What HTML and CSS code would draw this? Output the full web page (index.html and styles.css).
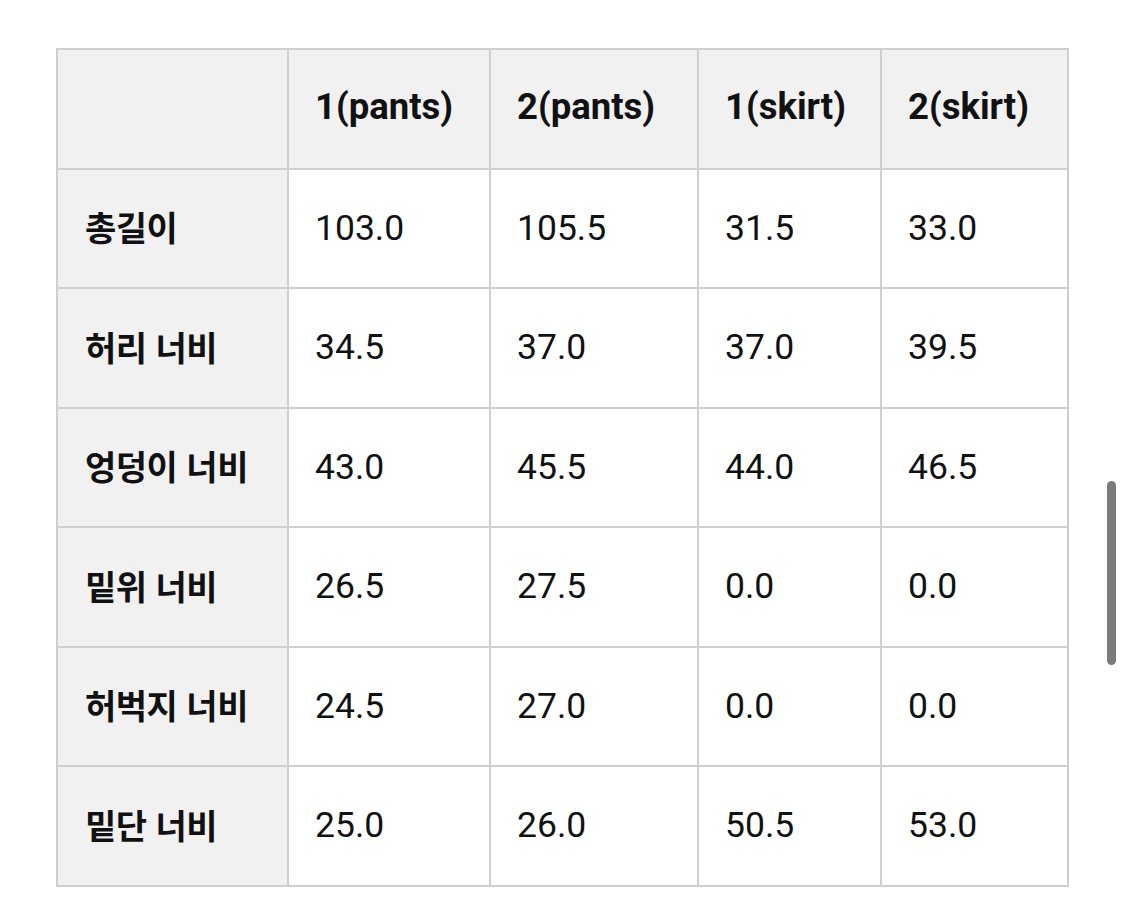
FILE: index.html
```html
<!DOCTYPE html>
<html lang="ko">
<head>
<meta charset="utf-8">
<link rel="stylesheet" href="styles.css">
</head>
<body>
<div class="page">
  <table class="size-table">
    <colgroup>
      <col class="c0"><col class="c1"><col class="c2"><col class="c3"><col class="c4">
    </colgroup>
    <thead>
      <tr>
        <th class="corner"></th>
        <th>1(pants)</th>
        <th>2(pants)</th>
        <th>1(skirt)</th>
        <th>2(skirt)</th>
      </tr>
    </thead>
    <tbody>
      <tr><th>총길이</th><td>103.0</td><td>105.5</td><td>31.5</td><td>33.0</td></tr>
      <tr><th>허리 너비</th><td>34.5</td><td>37.0</td><td>37.0</td><td>39.5</td></tr>
      <tr><th>엉덩이 너비</th><td>43.0</td><td>45.5</td><td>44.0</td><td>46.5</td></tr>
      <tr><th>밑위 너비</th><td>26.5</td><td>27.5</td><td>0.0</td><td>0.0</td></tr>
      <tr><th>허벅지 너비</th><td>24.5</td><td>27.0</td><td>0.0</td><td>0.0</td></tr>
      <tr><th>밑단 너비</th><td>25.0</td><td>26.0</td><td>50.5</td><td>53.0</td></tr>
    </tbody>
  </table>
  <div class="scroll-indicator"></div>
</div>
</body>
</html>
```

FILE: styles.css
```css
html, body {
  margin: 0;
  padding: 0;
  background: #ffffff;
}

body {
  font-family: Roboto, "Noto Sans CJK KR", "Noto Sans", sans-serif;
  color: #111111;
}

.page {
  width: 1125px;
  height: 897px;
  padding: 48px 0 0 56px;
  box-sizing: border-box;
  position: relative;
  overflow: hidden;
}

.size-table {
  border-collapse: collapse;
  table-layout: fixed;
  width: 1011px;
}

.c0 { width: 231px; }
.c1 { width: 202px; }
.c2 { width: 208px; }
.c3 { width: 183px; }
.c4 { width: 187px; }

.size-table tr {
  height: 119.5px;
}

.size-table th,
.size-table td {
  border: 2px solid #cfcfcf;
  padding: 0 0 0 26px;
  text-align: left;
  vertical-align: middle;
  font-size: 35.5px;
  line-height: 1;
}

.size-table td {
  font-weight: 400;
  background: #ffffff;
}

.size-table th {
  font-weight: 700;
  background: #f1f1f1;
}

.size-table thead th {
  font-size: 36.5px;
  padding-bottom: 4px;
}

.size-table tbody th {
  font-family: "Noto Sans CJK KR", sans-serif;
  font-size: 34px;
  padding-left: 27px;
  letter-spacing: -0.5px;
  padding-bottom: 2px;
}

.scroll-indicator {
  position: absolute;
  left: 1107px;
  top: 481px;
  width: 9px;
  height: 184px;
  border-radius: 5px;
  background: #7b7b7b;
}
```
